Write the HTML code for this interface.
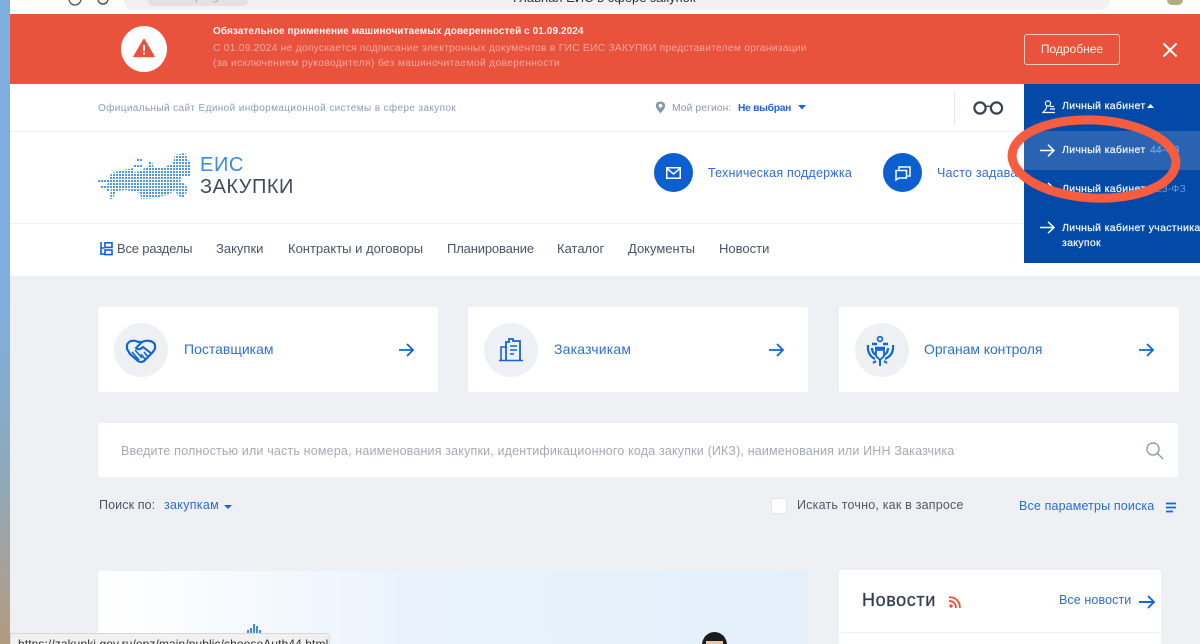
<!DOCTYPE html>
<html lang="ru"><head><meta charset="utf-8"><title>ЕИС Закупки</title>
<style>
html,body{margin:0;padding:0;width:1200px;height:644px;overflow:hidden;background:#eef0f3;font-family:"Liberation Sans",sans-serif}
#w{position:relative;width:1200px;height:644px;overflow:hidden;background:#eef0f3}
.a{position:absolute;white-space:nowrap}
.card{position:absolute;top:307px;width:340px;height:85px;background:#fff;border-radius:2px}
.circ{position:absolute;left:16px;top:16px;width:54px;height:54px;border-radius:50%;background:#eef0f3}
.card span{position:absolute;left:86px;top:34px;font-size:14px;line-height:16px;color:#2f6fd8;white-space:nowrap}
.nav{top:241px;font-size:13px;line-height:16px;color:#4a5368}
.m{left:1062px;font-size:10.5px;line-height:15px;color:#eef3fb;letter-spacing:.32px;-webkit-text-stroke:.25px #eef3fb}
svg{position:absolute;overflow:visible}
</style></head><body><div id="w">
<div class="a" style="left:0;top:0;width:10px;height:644px;background:linear-gradient(#7eaede 0,#7eaede 300px,#8fa9b9 480px,#a8a096 580px,#b09a80 644px)"></div>
<div class="a" style="left:10px;top:0;width:1190px;height:14px;background:#fff"></div>
<div class="a" style="left:124px;top:0;width:986px;height:10px;background:#f1f1f1;border-radius:0 0 9px 9px"></div>
<div class="a" style="left:148px;top:0;width:100px;height:6px;background:#e2e2e2;border-radius:0 0 5px 5px"></div>
<div class="a" style="left:513px;top:-10px;font-size:13px;line-height:15px;color:#333">Главная ЕИС в сфере закупок</div>
<div class="a" style="left:172px;top:-10px;font-size:11px;line-height:15px;color:#aaa">zakupki.gov.ru</div>
<svg style="left:60px;top:0" width="60" height="6"><circle cx="15" cy="-1" r="6" fill="none" stroke="#555" stroke-width="1.3"/><circle cx="43" cy="-1" r="5" fill="none" stroke="#555" stroke-width="1.5"/></svg>
<div class="a" style="left:1167px;top:0;width:16px;height:5px;background:#b5ab7c;border-radius:0 0 8px 8px"></div>
<div class="a" style="left:10px;top:14px;width:1190px;height:70px;background:#e9523c"></div>
<div class="a" style="left:121px;top:26px;width:46px;height:46px;border-radius:50%;background:#fff"></div>
<svg style="left:133px;top:38px" width="22" height="20"><path d="M11 1.5 L21 18.5 H1 Z" fill="#e9523c" stroke="#e9523c" stroke-width="1.5" stroke-linejoin="round"/><rect x="10" y="7" width="2" height="6" fill="#fff"/><rect x="10" y="14.5" width="2" height="2" fill="#fff"/></svg>
<div class="a" style="left:213px;top:25px;font-size:10px;line-height:14px;font-weight:bold;color:#fff4ee;letter-spacing:.08px">Обязательное применение машиночитаемых доверенностей с 01.09.2024</div>
<div class="a" style="left:213px;top:41px;font-size:10.3px;line-height:15px;color:#f7a79a;letter-spacing:.23px">С 01.09.2024 не допускается подписание электронных документов в ГИС ЕИС ЗАКУПКИ представителем организации</div>
<div class="a" style="left:213px;top:56px;font-size:10.3px;line-height:15px;color:#f7a79a;letter-spacing:.31px">(за исключением руководителя) без машиночитаемой доверенности</div>
<div class="a" style="left:1024px;top:34px;width:94px;height:29px;border:1px solid #f9cfc6;border-radius:3px;font-size:12px;line-height:29px;text-align:center;color:#fff3e6">Подробнее</div>
<svg style="left:1162px;top:42px" width="16" height="16"><path d="M1.5 1.5 L14.5 14.5 M14.5 1.5 L1.5 14.5" stroke="#fff" stroke-width="2"/></svg>

<div class="a" style="left:10px;top:84px;width:1190px;height:192px;background:#fff"></div>
<div class="a" style="left:10px;top:131px;width:1014px;height:1px;background:#eef1f6"></div>
<div class="a" style="left:10px;top:223px;width:1014px;height:1px;background:#eef1f6"></div>
<div class="a" style="left:98px;top:101px;font-size:10px;line-height:15px;color:#8c9cb8;letter-spacing:.38px">Официальный сайт Единой информационной системы в сфере закупок</div>
<svg style="left:655px;top:101px" width="11" height="13"><path d="M5.5 0.5 C2.5 .5 .8 2.5 .8 4.8 C.8 7.5 4 10.5 5.5 12.5 C7 10.5 10.2 7.5 10.2 4.8 C10.2 2.5 8.5 .5 5.5 .5Z" fill="#8b96a8"/><circle cx="5.5" cy="4.7" r="1.8" fill="#fff"/></svg>
<div class="a" style="left:672px;top:101px;font-size:10.3px;line-height:15px;color:#8c97aa;letter-spacing:.1px">Мой регион:</div>
<div class="a" style="left:738px;top:101px;font-size:10.3px;line-height:15px;color:#2a62d6;font-weight:bold;letter-spacing:-.3px">Не выбран</div>
<svg style="left:798px;top:105px" width="9" height="5"><path d="M0 0H8L4 4.5Z" fill="#1d64d8"/></svg>
<div class="a" style="left:954px;top:92px;width:1px;height:32px;background:#e6e9ee"></div>
<svg style="left:972px;top:100px" width="33" height="16"><circle cx="8" cy="8" r="5.6" fill="none" stroke="#3a4356" stroke-width="2.2"/><circle cx="24.5" cy="8" r="5.6" fill="none" stroke="#3a4356" stroke-width="2.2"/><path d="M13 7 Q16 5.5 19.5 7" stroke="#3a4356" stroke-width="1.6" fill="none"/></svg>

<!-- logo -->
<svg style="left:98px;top:153px" width="96" height="48">
<defs><pattern id="d" width="3" height="3" patternUnits="userSpaceOnUse"><rect width="2" height="2" fill="#4f98ec"/></pattern></defs>
<path fill="url(#d)" d="M13 20 L25 17 L35 15 L35 20 L42 18 L50 13 L55 10 L55 15 L65 15 L75 10 L77 2 L87 0 L90 7 L93 10 L93 23 L85 23 L82 28 L88 32 L90 37 L85 45 L80 43 L77 37 L70 42 L65 43 L58 45 L43 46 L42 40 L28 37 L18 38 L15 46 L12 46 L13 35 L9 33 Z"/>
<path fill="url(#d)" d="M0 27 H12 V30 H0 Z M3 33 H12 V36 H3 Z M9 36 H12 V39 H9Z M39 6 H45 V9 H39Z M36 12 H45 V15 H36Z M51 9 H54 V12 H51Z"/>
</svg>
<div class="a" style="left:200px;top:153px;font-size:20px;line-height:24px;color:#3a8aea;letter-spacing:.6px">ЕИС</div>
<div class="a" style="left:200px;top:175px;font-size:20px;line-height:24px;color:#434c5e;letter-spacing:.5px">ЗАКУПКИ</div>

<div class="a" style="left:654px;top:153px;width:39px;height:39px;border-radius:50%;background:#0b5fd0"></div>
<svg style="left:666px;top:167px" width="15" height="12"><rect x=".75" y=".75" width="13.5" height="10.5" fill="none" stroke="#fff" stroke-width="1.5"/><path d="M1 1.5 L7.5 7 L14 1.5" fill="none" stroke="#fff" stroke-width="1.5"/></svg>
<div class="a" style="left:708px;top:166px;font-size:12.5px;line-height:15px;color:#2e6cd6;letter-spacing:.22px">Техническая поддержка</div>
<div class="a" style="left:883px;top:153px;width:39px;height:39px;border-radius:50%;background:#0b5fd0"></div>
<svg style="left:895px;top:166px" width="16" height="15"><path d="M4 3.5 V1 H15 V10 H12.5" fill="none" stroke="#fff" stroke-width="1.5"/><path d="M1 4.5 H11.5 V12 H4 L1 14Z" fill="none" stroke="#fff" stroke-width="1.5"/></svg>
<div class="a" style="left:937px;top:166px;font-size:12.5px;line-height:15px;color:#2e6cd6;letter-spacing:.22px">Часто задаваемые</div>

<svg style="left:100px;top:242px" width="13" height="14"><path d="M1 0V13 M1 6H4.5 M1 12H4.5" stroke="#0b63d6" stroke-width="1.6" fill="none"/><rect x="5" y=".8" width="7" height="4.6" fill="none" stroke="#0b63d6" stroke-width="1.6"/><rect x="5" y="8" width="7" height="4.6" fill="none" stroke="#0b63d6" stroke-width="1.6"/></svg>
<div class="a nav" style="left:117px;letter-spacing:-.18px">Все разделы</div>
<div class="a nav" style="left:216px">Закупки</div>
<div class="a nav" style="left:288px">Контракты и договоры</div>
<div class="a nav" style="left:447px;letter-spacing:-.15px">Планирование</div>
<div class="a nav" style="left:557px">Каталог</div>
<div class="a nav" style="left:628px">Документы</div>
<div class="a nav" style="left:719px">Новости</div>

<!-- dropdown -->
<div class="a" style="left:1024px;top:84px;width:176px;height:179px;background:#0349a8"></div>
<div class="a" style="left:1024px;top:131px;width:176px;height:39px;background:#2a63b2"></div>
<svg style="left:1042px;top:100px" width="14" height="14"><circle cx="6" cy="3.5" r="2.6" fill="none" stroke="#fff" stroke-width="1.2"/><path d="M4.5 6 C5 9 3 10 1 12.5 H13 M8 9H13 M8 6.5H12" fill="none" stroke="#fff" stroke-width="1.2"/></svg>
<div class="a m" style="top:99px">Личный кабинет</div>
<svg style="left:1147px;top:104px" width="8" height="4"><path d="M0 4H7L3.5 0Z" fill="#fff"/></svg>
<svg style="left:1040px;top:144px" width="15" height="13"><path d="M0 6.5H14 M8 .8 L14 6.5 L8 12.2" stroke="#fff" stroke-width="1.5" fill="none"/></svg>
<div class="a m" style="top:143px">Личный кабинет</div>
<div class="a" style="left:1150px;top:143px;font-size:10.5px;line-height:15px;color:#6ea5e6;-webkit-text-stroke:.2px #6ea5e6">44-ФЗ</div>
<svg style="left:1040px;top:182px" width="15" height="13"><path d="M0 6.5H14 M8 .8 L14 6.5 L8 12.2" stroke="#fff" stroke-width="1.5" fill="none"/></svg>
<div class="a m" style="top:182px">Личный кабинет</div>
<div class="a" style="left:1150px;top:182px;font-size:10.5px;line-height:15px;color:#5f9be0;letter-spacing:.1px">223-ФЗ</div>
<svg style="left:1040px;top:221px" width="15" height="13"><path d="M0 6.5H14 M8 .8 L14 6.5 L8 12.2" stroke="#fff" stroke-width="1.5" fill="none"/></svg>
<div class="a m" style="top:221px">Личный кабинет участника</div>
<div class="a m" style="top:236px">закупок</div>
<svg style="left:1000px;top:105px" width="200" height="110"><ellipse cx="94" cy="54" rx="82" ry="39" transform="rotate(3 94 54)" fill="none" stroke="#f65d3f" stroke-width="9"/></svg>

<!-- cards -->
<div class="card" style="left:98px"><div class="circ"></div><span>Поставщикам</span></div>
<svg style="left:125px;top:339px" width="33" height="25"><path d="M2 6 Q3 3 6 2 Q10 1 13 3 L17 3 Q21 1 25 2 Q29 3 30 6 L30 10 L27 14 L19 22 Q16 24 13 22 L5 15 L2 10Z" fill="none" stroke="#0f66d8" stroke-width="2.2" stroke-linejoin="round"/><path d="M17 3 L11 9 Q14 12 18 8 L27 15" fill="none" stroke="#0f66d8" stroke-width="2"/><path d="M7 13 L14 21 M10 11 L17 19 M19 13 L23 18 M16 15 L20 20" stroke="#0f66d8" stroke-width="1.6"/></svg>
<svg style="left:399px;top:343px" width="15" height="14"><path d="M0 7H14 M8 1 L14 7 L8 13" stroke="#0f66d8" stroke-width="1.8" fill="none"/></svg>
<div class="card" style="left:468px"><div class="circ"></div><span style="letter-spacing:.2px">Заказчикам</span></div>
<svg style="left:499px;top:338px" width="24" height="24"><path d="M7 22V4 L10 4V1H14V3H21V22" fill="none" stroke="#0f66d8" stroke-width="1.8"/><path d="M7 9H2V22 M0 22.5H24 M11 8H18 M11 12H18 M11 16H15" fill="none" stroke="#0f66d8" stroke-width="1.6"/></svg>
<svg style="left:769px;top:343px" width="15" height="14"><path d="M0 7H14 M8 1 L14 7 L8 13" stroke="#0f66d8" stroke-width="1.8" fill="none"/></svg>
<div class="card" style="left:839px"><div class="circ"></div><span style="left:85px;letter-spacing:-.07px">Органам контроля</span></div>
<svg style="left:866px;top:335px" width="30" height="32"><circle cx="14" cy="4" r="2.4" fill="none" stroke="#0f66d8" stroke-width="1.7"/><path d="M6 9h5M17 9h5M9 13h10" stroke="#0f66d8" stroke-width="2.6"/><path d="M2 10 Q1 20 9 24 M27 10 Q28 20 19 24 M6 13 Q6 18 10 20 M22 13 Q22 18 18 20" fill="none" stroke="#0f66d8" stroke-width="2.2"/><path d="M10 15H18V21L14 25L10 21Z" fill="none" stroke="#0f66d8" stroke-width="1.8"/><path d="M14 25V31 M7 28L10 26 M21 28L18 26" stroke="#0f66d8" stroke-width="2"/></svg>
<svg style="left:1139px;top:343px" width="15" height="14"><path d="M0 7H14 M8 1 L14 7 L8 13" stroke="#0f66d8" stroke-width="1.8" fill="none"/></svg>

<!-- search -->
<div class="a" style="left:98px;top:423px;width:1080px;height:54px;background:#fff;border-radius:2px"></div>
<div class="a" style="left:121px;top:444px;font-size:12.5px;line-height:15px;color:#a4aab5;letter-spacing:.17px">Введите полностью или часть номера, наименования закупки, идентификационного кода закупки (ИКЗ), наименования или ИНН Заказчика</div>
<svg style="left:1146px;top:442px" width="18" height="18"><circle cx="7" cy="7" r="6" fill="none" stroke="#8f9bb0" stroke-width="1.4"/><path d="M11.5 11.5 L17 17" stroke="#8f9bb0" stroke-width="1.4"/></svg>
<div class="a" style="left:99px;top:498px;font-size:12.5px;line-height:15px;color:#4a5368;letter-spacing:.1px">Поиск по:</div>
<div class="a" style="left:164px;top:498px;font-size:12.5px;line-height:15px;color:#2e6cd6;letter-spacing:.3px">закупкам</div>
<svg style="left:224px;top:505px" width="9" height="5"><path d="M0 0H8L4 4Z" fill="#1d64d8"/></svg>
<div class="a" style="left:771px;top:498px;width:14px;height:14px;background:#fff;border:1px solid #e3e6ea;border-radius:2px"></div>
<div class="a" style="left:797px;top:498px;font-size:12.5px;line-height:15px;color:#4f586c;letter-spacing:.2px">Искать точно, как в запросе</div>
<div class="a" style="left:1019px;top:499px;font-size:12.5px;line-height:15px;color:#2e6cd6;letter-spacing:.14px">Все параметры поиска</div>
<svg style="left:1166px;top:502px" width="11" height="11"><path d="M0 1.5H10M0 5.5H10M0 9.5H7" stroke="#1266d8" stroke-width="1.7"/></svg>

<!-- banner -->
<div class="a" style="left:98px;top:571px;width:710px;height:73px;background:linear-gradient(90deg,#fff 0,#f6fafe 20%,#e9f2fc 45%,#e3f0fb 100%);border-radius:2px 2px 0 0"></div>
<svg style="left:247px;top:624px" width="16" height="10"><path fill="#3d8cea" d="M0 6h2v4H0zM3 4h2v6H3zM6 0h2v10H6zM9 2h2v8H9zM12 6h2v4h-2z"/></svg>
<div class="a" style="left:702px;top:632px;width:25px;height:26px;border-radius:50%;background:#1b1b1f"></div>
<div class="a" style="left:706px;top:641px;width:17px;height:8px;background:#eec6a6"></div>

<!-- news -->
<div class="a" style="left:839px;top:570px;width:322px;height:74px;background:#fff;border-radius:2px"></div>
<div class="a" style="left:839px;top:632px;width:322px;height:1px;background:#eef0f3"></div>
<div class="a" style="left:862px;top:590px;font-size:18px;line-height:21px;color:#333d52;letter-spacing:.6px;-webkit-text-stroke:.3px #333d52">Новости</div>
<svg style="left:949px;top:596px" width="12" height="12"><circle cx="2" cy="10" r="1.7" fill="#ea5440"/><path d="M0 5.2 A6 6 0 0 1 6.8 12 M0 1.2 A10 10 0 0 1 10.8 12" fill="none" stroke="#ea5440" stroke-width="1.9"/></svg>
<div class="a" style="left:1059px;top:593px;font-size:12.5px;line-height:15px;color:#2e6cd6;letter-spacing:.1px">Все новости</div>
<svg style="left:1139px;top:595px" width="16" height="14"><path d="M0 7H15 M9 1 L15 7 L9 13" stroke="#1266d8" stroke-width="1.9" fill="none"/></svg>

<!-- status tooltip -->
<div class="a" style="left:10px;top:633px;width:320px;height:14px;background:#f1f1f1;border:1px solid #d9d9d9;border-radius:0 3px 0 0;box-sizing:border-box"></div>
<div class="a" style="left:18px;top:638px;font-size:12px;line-height:13px;color:#333;letter-spacing:.09px">https://zakupki.gov.ru/epz/main/public/chooseAuth44.html</div>
</div></body></html>
